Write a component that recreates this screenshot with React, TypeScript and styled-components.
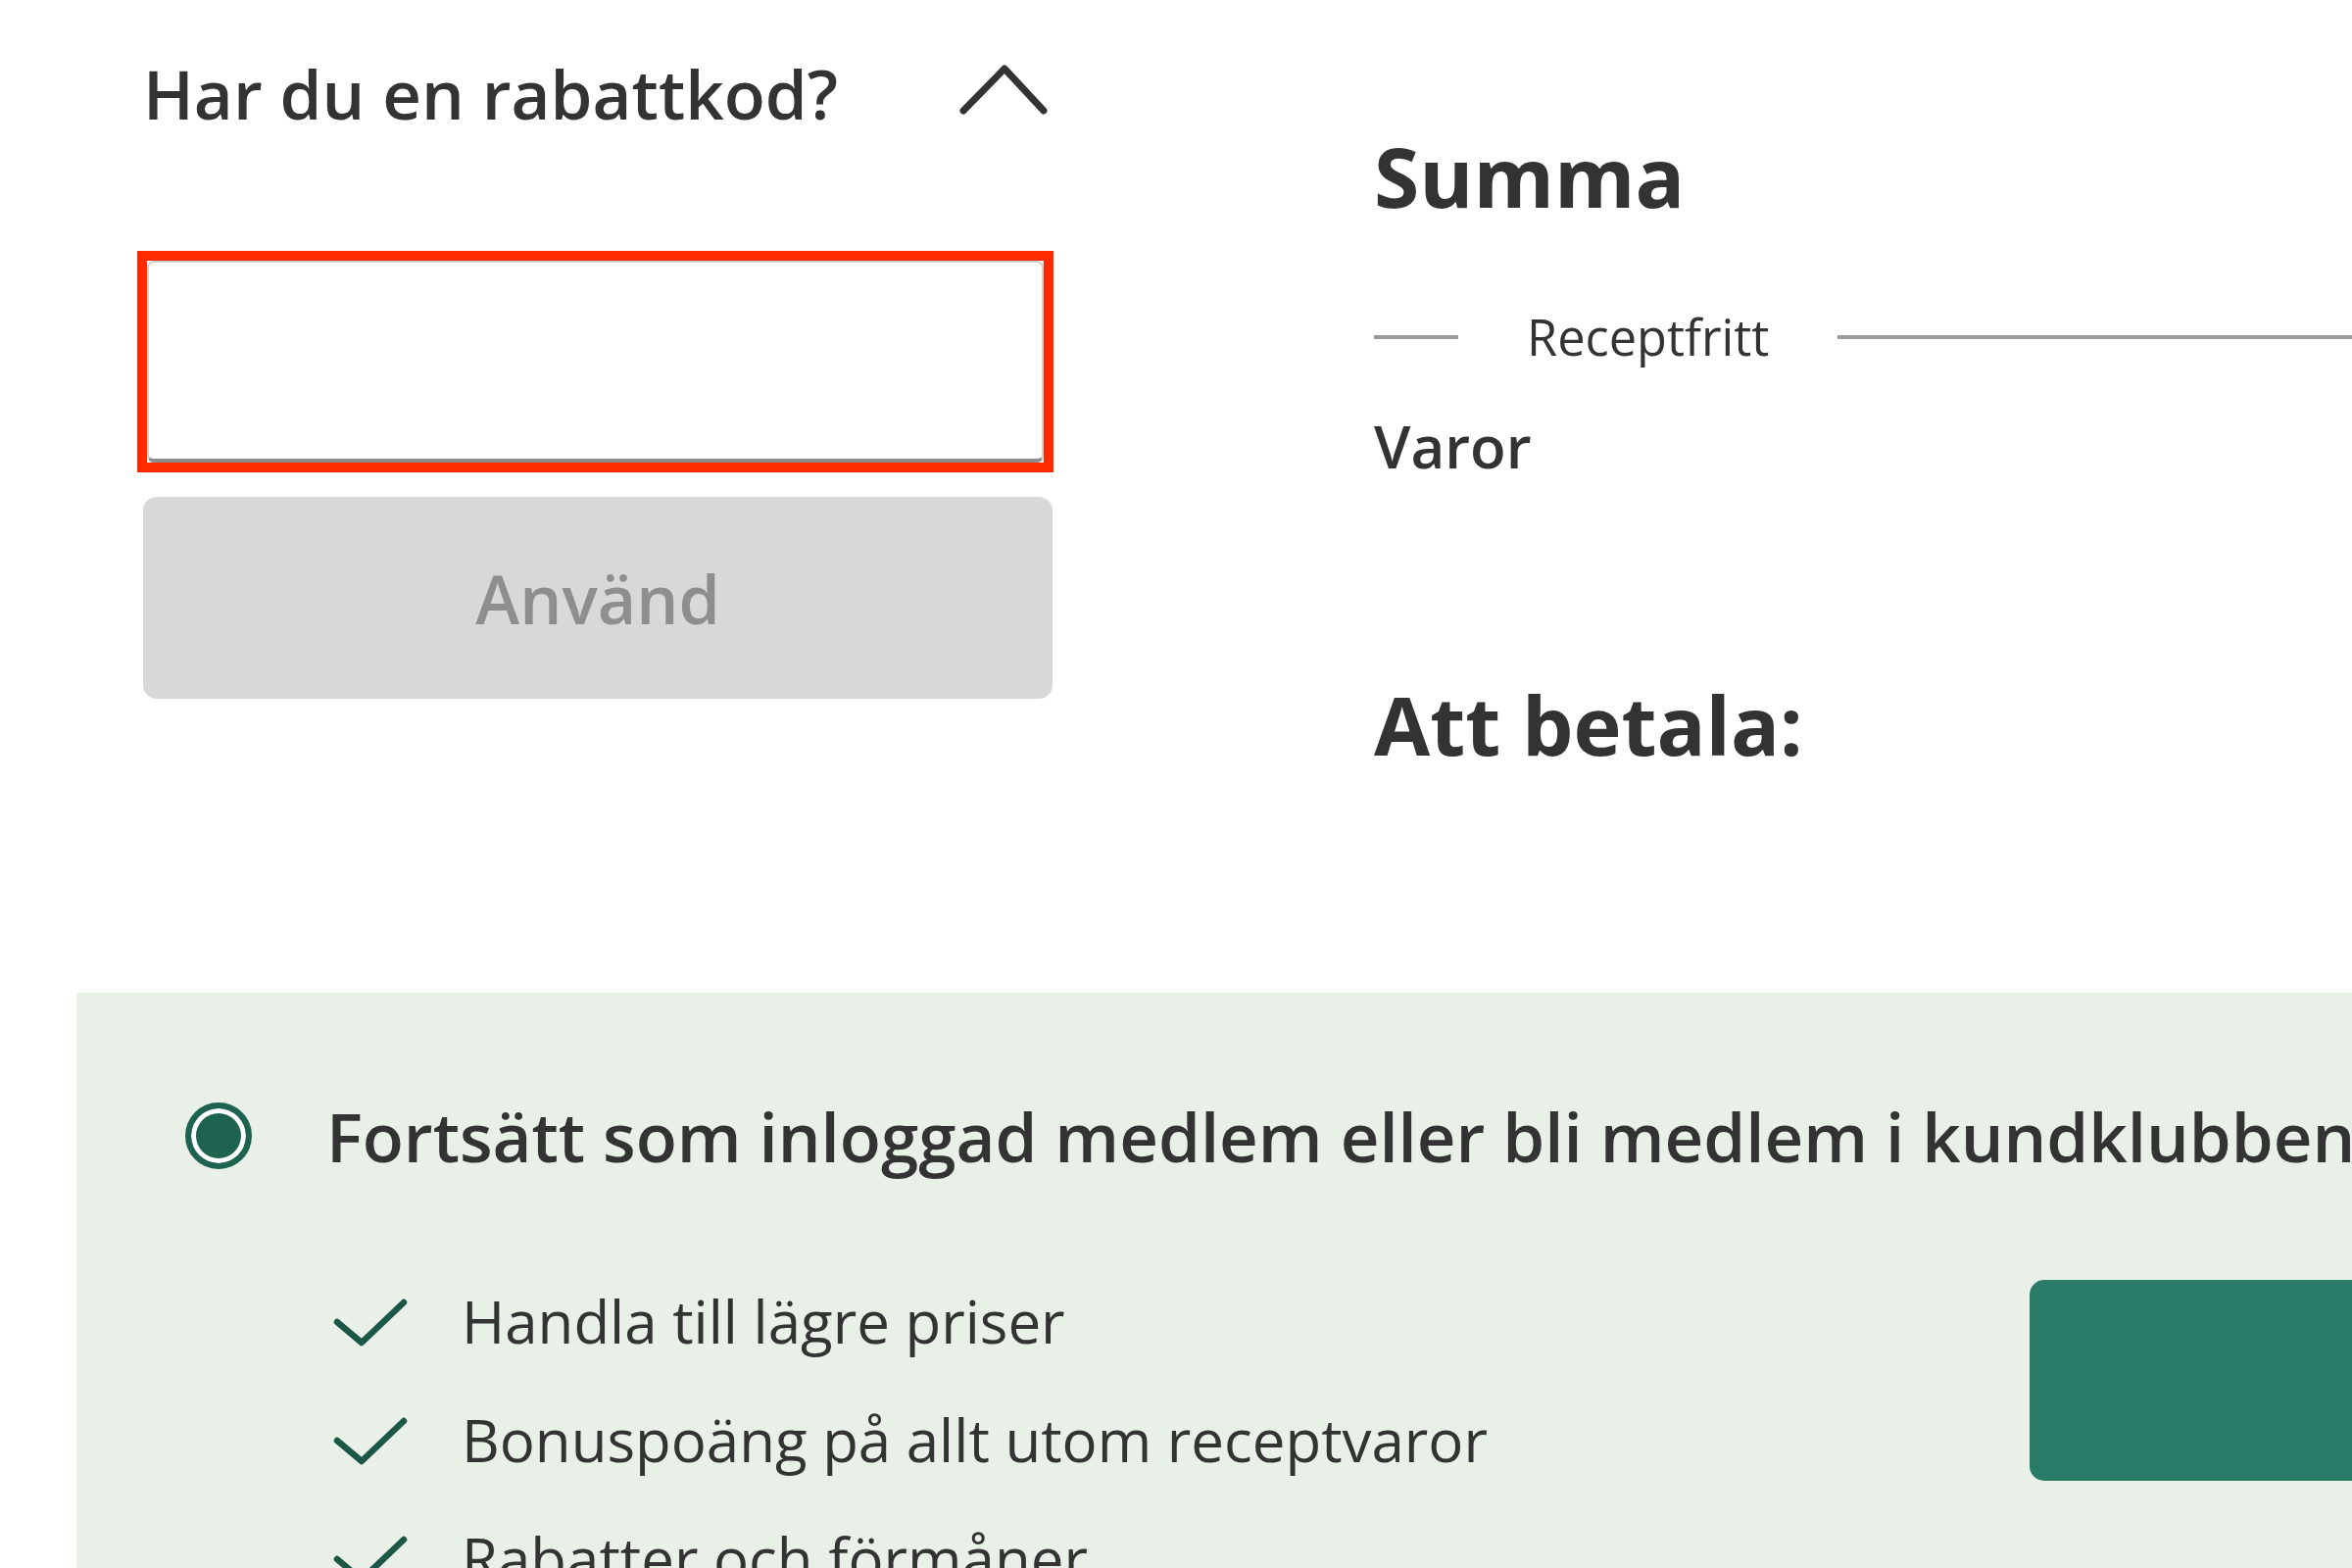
import styled, { createGlobalStyle } from 'styled-components';

const GlobalStyle = createGlobalStyle`
  html, body {
    margin: 0;
    padding: 0;
    background: #ffffff;
  }
  body {
    width: 2400px;
    height: 1600px;
    overflow: hidden;
    font-family: "Open Sans", "Noto Sans", sans-serif;
    color: #333333;
  }
`;

const perks = [
  'Handla till lägre priser',
  'Bonuspoäng på allt utom receptvaror',
  'Rabatter och förmåner',
];

function ChevronUp() {
  return (
    <svg width="90" height="52" viewBox="0 0 90 52" fill="none">
      <polyline points="4,47 46,4 86,47" stroke="#333333" strokeWidth="7" strokeLinecap="round" strokeLinejoin="round" />
    </svg>
  );
}

function Check() {
  return (
    <svg width="76" height="52" viewBox="0 0 76 52" fill="none">
      <polyline points="4,26 29,47 72,6" stroke="#1c5646" strokeWidth="6.5" strokeLinecap="round" strokeLinejoin="round" />
    </svg>
  );
}

export default function App() {
  return (
    <>
      <GlobalStyle />
      <Page>
        <TopSection>
          <DiscountColumn>
            <DiscountHeader>
              <DiscountTitle>Har du en rabattkod?</DiscountTitle>
              <ToggleIcon>
                <ChevronUp />
              </ToggleIcon>
            </DiscountHeader>

            <FocusFrame>
              <CodeInput type="text" aria-label="Rabattkod" />
            </FocusFrame>

            <ApplyButton disabled>Använd</ApplyButton>
          </DiscountColumn>

          <SummaryColumn>
            <SummaryTitle>Summa</SummaryTitle>
            <GroupDivider>
              <DividerLine $short />
              <GroupLabel>Receptfritt</GroupLabel>
              <DividerLine />
            </GroupDivider>
            <SummaryRow>Varor</SummaryRow>
            <TotalTitle>Att betala:</TotalTitle>
          </SummaryColumn>
        </TopSection>

        <MemberPanel>
          <MemberHeader>
            <Radio />
            <MemberTitle>Fortsätt som inloggad medlem eller bli medlem i kundklubben</MemberTitle>
          </MemberHeader>

          <MemberBody>
            <PerkList>
              {perks.map((perk) => (
                <Perk key={perk}>
                  <Check />
                  <PerkText>{perk}</PerkText>
                </Perk>
              ))}
            </PerkList>
            <LoginButton type="button" aria-label="Logga in" />
          </MemberBody>
        </MemberPanel>
      </Page>
    </>
  );
}

const Page = styled.main`
  display: flex;
  flex-direction: column;
  width: 2400px;
`;

const TopSection = styled.section`
  display: flex;
  align-items: flex-start;
  padding-left: 146px;
  gap: 328px;
`;

const DiscountColumn = styled.div`
  display: flex;
  flex-direction: column;
  width: 928px;
  padding-top: 49px;
`;

const DiscountHeader = styled.div`
  display: flex;
  align-items: center;
  justify-content: space-between;
  height: 92px;
  padding-right: 5px;
`;

const DiscountTitle = styled.h2`
  margin: 0;
  font-size: 69px;
  line-height: 92px;
  font-weight: 600;
  color: #333333;
`;

const ToggleIcon = styled.span`
  display: flex;
  margin-top: -6px;
`;

const FocusFrame = styled.div`
  display: flex;
  width: 935px;
  box-sizing: border-box;
  margin: 115px 0 0 -6px;
  border: 10px solid #ff2a00;
`;

const CodeInput = styled.input`
  box-sizing: border-box;
  width: 100%;
  height: 206px;
  margin: 0;
  padding: 0 30px;
  border: 2px solid #cfcfcf;
  border-bottom: 4px solid #8c8c8c;
  border-radius: 7px;
  background: #ffffff;
  font-family: "Open Sans", sans-serif;
  font-size: 60px;
  color: #333333;
  outline: none;
`;

const ApplyButton = styled.button`
  box-sizing: border-box;
  width: 928px;
  height: 206px;
  margin-top: 25px;
  border: none;
  border-radius: 14px;
  background: #d8d8d8;
  color: #8e8e8e;
  font-family: "Open Sans", sans-serif;
  font-size: 68px;
  font-weight: 600;
`;

const SummaryColumn = styled.div`
  display: flex;
  flex-direction: column;
  flex: 1;
  padding-top: 129px;
`;

const SummaryTitle = styled.h2`
  margin: 0;
  font-size: 84px;
  line-height: 102px;
  font-weight: 700;
  color: #333333;
`;

const GroupDivider = styled.div`
  display: flex;
  align-items: center;
  gap: 70px;
  margin-top: 79px;
  height: 68px;
`;

const DividerLine = styled.span<{ $short?: boolean }>`
  height: 4px;
  background: #9a9a9a;
  ${({ $short }) => ($short ? 'width: 86px; flex: none;' : 'flex: 1;')}
`;

const GroupLabel = styled.span`
  font-size: 50.5px;
  line-height: 68px;
  font-weight: 400;
  color: #333333;
`;

const SummaryRow = styled.div`
  margin-top: 36px;
  font-size: 60px;
  line-height: 82px;
  font-weight: 600;
  color: #333333;
`;

const TotalTitle = styled.h2`
  margin: 192px 0 0;
  font-size: 83px;
  line-height: 102px;
  font-weight: 700;
  color: #333333;
`;

const MemberPanel = styled.section`
  margin: 223px 0 0 78px;
  padding: 100px 0 0 111px;
  min-height: 700px;
  background: #e8f0e8;
`;

const MemberHeader = styled.div`
  display: flex;
  align-items: center;
  gap: 76px;
  height: 92px;
`;

const Radio = styled.span`
  flex: none;
  box-sizing: border-box;
  width: 68px;
  height: 68px;
  border-radius: 50%;
  border: 6px solid #1d6350;
  background: #1d6350;
  box-shadow: inset 0 0 0 5px #ffffff;
`;

const MemberTitle = styled.h3`
  margin: 0;
  white-space: nowrap;
  font-size: 69px;
  line-height: 92px;
  font-weight: 600;
  color: #333333;
`;

const MemberBody = styled.div`
  display: flex;
  align-items: flex-start;
  margin-top: 83px;
`;

const PerkList = styled.ul`
  flex: none;
  width: 1731px;
  list-style: none;
  margin: 0 0 0 151px;
  padding: 0;
`;

const Perk = styled.li`
  display: flex;
  align-items: center;
  gap: 55px;
  height: 121px;
`;

const PerkText = styled.span`
  font-size: 60px;
  line-height: 121px;
  font-weight: 400;
  color: #333333;
`;

const LoginButton = styled.button`
  flex: none;
  width: 600px;
  height: 205px;
  margin-top: 18px;
  border: none;
  border-radius: 15px;
  background: #2b7b69;
`;
